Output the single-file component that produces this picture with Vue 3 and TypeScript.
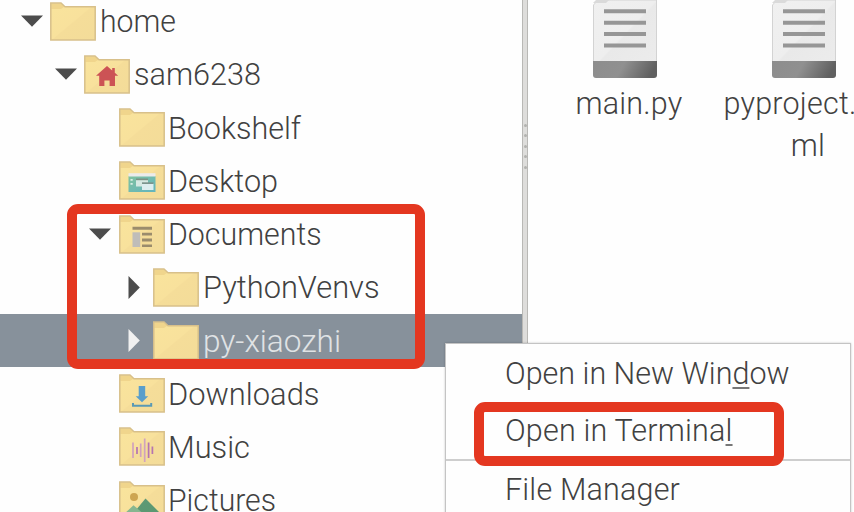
<script setup lang="ts">
type Emblem = 'home' | 'desktop' | 'documents' | 'downloads' | 'music' | 'pictures'

interface TreeNode {
  name: string
  level: number
  state?: 'open' | 'closed'
  emblem?: Emblem
  selected?: boolean
  width: number
}

const nodes: TreeNode[] = [
  { name: 'home', level: 0, state: 'open', width: 77 },
  { name: 'sam6238', level: 1, state: 'open', emblem: 'home', width: 128 },
  { name: 'Bookshelf', level: 2, width: 134 },
  { name: 'Desktop', level: 2, emblem: 'desktop', width: 111 },
  { name: 'Documents', level: 2, state: 'open', emblem: 'documents', width: 154.5 },
  { name: 'PythonVenvs', level: 3, state: 'closed', width: 177.5 },
  { name: 'py-xiaozhi', level: 3, state: 'closed', selected: true, width: 139 },
  { name: 'Downloads', level: 2, emblem: 'downloads', width: 152.5 },
  { name: 'Music', level: 2, emblem: 'music', width: 83 },
  { name: 'Pictures', level: 2, emblem: 'pictures', width: 109 },
]

const files: string[][] = [['main.py'], ['pyproject.', 'ml']]
</script>

<template>
  <div class="window">
    <svg class="defs" width="0" height="0" aria-hidden="true">
      <defs>
        <linearGradient id="folderFill" x1="0" y1="0" x2="1" y2="1">
          <stop offset="0" stop-color="#f9e49c" />
          <stop offset=".5" stop-color="#f8e19c" />
          <stop offset=".52" stop-color="#f5dd99" />
          <stop offset="1" stop-color="#f3dc99" />
        </linearGradient>
        <linearGradient id="paper" x1="0" y1="0" x2="1" y2="1">
          <stop offset="0" stop-color="#f0f0f0" />
          <stop offset=".5" stop-color="#eeeeee" />
          <stop offset=".52" stop-color="#e9e9e9" />
          <stop offset="1" stop-color="#ececec" />
        </linearGradient>
        <linearGradient id="band" x1="0" y1="0" x2="1" y2="0.15">
          <stop offset="0" stop-color="#8d8d8d" />
          <stop offset=".5" stop-color="#909090" />
          <stop offset="1" stop-color="#606060" />
        </linearGradient>
        <linearGradient id="screen" x1="0" y1="0" x2="1" y2="1">
          <stop offset="0" stop-color="#80c29f" />
          <stop offset="1" stop-color="#62b4be" />
        </linearGradient>
        <linearGradient id="hill" x1="0" y1="0" x2="1" y2="1">
          <stop offset="0" stop-color="#5f9a76" />
          <stop offset="1" stop-color="#5a9871" />
        </linearGradient>
      </defs>
    </svg>

    <nav class="tree">
      <div v-for="n in nodes" :key="n.name" class="row" :class="{ selected: n.selected }">
        <div class="indent" :style="{ width: n.level * 34.3 + 'px' }"></div>
        <div class="twisty">
          <svg v-if="n.state === 'open'" width="22" height="12" viewBox="0 0 22 12">
            <path d="M0 .5H22L11 11.8Z" />
          </svg>
          <svg v-else-if="n.state === 'closed'" width="12" height="23" viewBox="0 0 12 23">
            <path d="M.5 0V23L11.8 11.5Z" />
          </svg>
        </div>
        <svg class="folder" width="46" height="39" viewBox="0 0 46 39">
          <path d="M.8 1H11L15 4.7H45.2V38H.8Z" fill="url(#folderFill)" />
          <path d="M1.3 1.6H11L14.3 4.7L11 7H1.3Z" fill="#f0d58c" />
          <path d="M.8 1H11L15 4.7H45.2V38H.8Z" fill="none" stroke="#d8c08a" stroke-width="1.5" />
          <g v-if="n.emblem === 'home'">
            <path d="M23 11L12 20.7H15.2V31H20.4V25.5H25.6V31H31V20.7H34.2L30.8 17.7V13H28.2V15.5Z" fill="#cc5355" />
          </g>
          <g v-else-if="n.emblem === 'desktop'">
            <path d="M9.5 15H36.5V31H9.5Z" fill="url(#screen)" />
            <path d="M9.5 12.2H36.5V15.5H9.5Z" fill="#ebebeb" />
            <path d="M11.5 18H13.7V19.8H11.5ZM11.5 22H13.7V23.8H11.5Z" fill="#d9eee4" />
            <path d="M17 18.5H29V25.5H17Z" fill="#d5e9e3" />
            <path d="M17 17.5H29V19.2H17Z" fill="#7b9286" />
            <path d="M23 22.5H34.5V29H23Z" fill="#dceef0" />
            <path d="M23 21.3H34.5V23H23Z" fill="#7b948d" />
          </g>
          <g v-else-if="n.emblem === 'documents'">
            <path d="M13.5 11.7H33V14.8H13.5ZM23 17.7H33V20.6H23ZM23 23.6H33V26.5H23ZM23 29.4H33V32H23Z" fill="#9b8c6c" />
            <path d="M13.5 17.3H21.2V32H13.5Z" fill="#bfbdb9" />
          </g>
          <g v-else-if="n.emblem === 'downloads'">
            <path d="M19.7 12H26.2V22.3H29.2L23 28.2L16.7 22.3H19.7Z" fill="#599ecb" />
            <path d="M14 29V31.8H32.2V29" fill="none" stroke="#5999b5" stroke-width="2" />
          </g>
          <g v-else-if="n.emblem === 'music'" fill="none" stroke-width="1.7">
            <path d="M14 15.5V31M21.7 16.5V30M25.7 11.5V35" stroke="#d1a2bd" />
            <path d="M18 20V27M29.6 15.5V31M33.4 19.5V27" stroke="#b574b1" />
          </g>
          <g v-else-if="n.emblem === 'pictures'">
            <circle cx="15" cy="16" r="4" fill="#cda552" />
            <path d="M12 35L26.5 17.5L42 33V35Z" fill="url(#hill)" />
            <path d="M4 34L14.5 24.3L26 34Z" fill="#86b690" />
          </g>
        </svg>
        <svg class="label" :width="n.width + 6" height="44">
          <text x="3" y="32.5" :textLength="n.width - 1" lengthAdjust="spacingAndGlyphs">{{ n.name }}</text>
        </svg>
      </div>
    </nav>

    <div class="splitter"><i v-for="d in 5" :key="d"></i></div>

    <main class="files">
      <div v-for="f in files" :key="f[0]" class="file">
        <svg width="66" height="80" viewBox="0 0 66 80">
          <path d="M1.5 5L6 0H64.5V66H1.5Z" fill="url(#paper)" stroke="#d3d3d3" />
          <path d="M1 3L4 0H17L14 3Z" fill="#dadada" />
          <path d="M1 61H65V75Q65 78 62 78H4Q1 78 1 75Z" fill="url(#band)" />
          <path d="M12 11.2H54M12 22.7H54M12 34.1H54M12 45.5H54" stroke="#969696" stroke-width="4" />
        </svg>
        <span v-for="line in f" :key="line" :class="{ long: line.endsWith('.') }">{{ line }}</span>
      </div>
    </main>

    <div class="menu">
      <div class="item">Open in New Win<u>d</u>ow</div>
      <div class="item terminal">Open in Termina<u>l</u></div>
      <div class="item last">File Manager</div>
    </div>
    <div class="mark mark-folder"></div>
    <div class="mark mark-terminal"></div>
  </div>
</template>

<style>
body {
  background: #fefefe;
  overflow: hidden;
}
</style>

<style scoped>
.window {
  position: relative;
  display: flex;
  width: 854px;
  height: 512px;
  overflow: hidden;
  background: #fefefe;
  color: #414141;
  font: 300 30.5px/42px Roboto, sans-serif;
}
.defs {
  position: absolute;
}
.tree {
  flex: none;
  width: 522px;
  margin-top: -5.4px;
}
.row {
  display: flex;
  align-items: center;
  height: 53.23px;
}
.row.selected {
  background: #87919b;
  color: #e0e3e5;
}
.twisty {
  display: flex;
  justify-content: center;
  flex: none;
  width: 24px;
  margin-left: 19.5px;
  margin-right: 6.6px;
  color: #4c4c4c;
}
.twisty svg {
  fill: currentColor;
}
.selected .twisty {
  color: #f0f0f0;
}
.indent,
.folder,
.label {
  flex: none;
}
.label {
  margin-left: 0.6px;
  overflow: visible;
  fill: currentColor;
}
.splitter {
  display: flex;
  flex-direction: column;
  flex: none;
  align-items: center;
  gap: 7.4px;
  box-sizing: border-box;
  width: 6px;
  height: 512px;
  padding-top: 124px;
  background: #dedddb;
  border-left: 1px solid #b9b8b5;
  border-right: 1px solid #b9b8b5;
}
.splitter i {
  width: 3px;
  height: 3px;
  border-radius: 50%;
  background: #b2b2af;
}
.files {
  display: flex;
  flex: none;
  margin-left: 11.5px;
}
.file {
  display: flex;
  flex-direction: column;
  align-items: center;
  width: 179px;
  white-space: nowrap;
  letter-spacing: 0.2px;
}
.file svg {
  margin-bottom: 3px;
  margin-left: -9px;
}
.file .long {
  margin-right: 36px;
}
.menu {
  position: absolute;
  left: 445px;
  top: 343px;
  width: 404px;
  height: 180px;
  background: #fefefe;
  border: 1px solid #c4c4c4;
  box-shadow: 0 0 2px rgba(0, 0, 0, 0.22);
}
.item {
  height: 57.5px;
  padding-left: 59px;
  line-height: 59px;
}
.item u {
  text-decoration-color: #777;
  text-decoration-thickness: 2px;
  text-underline-offset: 3px;
}
.item.terminal {
  height: 57px;
  line-height: 57px;
  letter-spacing: 0.18px;
}
.item.last {
  border-top: 2px solid #cecece;
  line-height: 58px;
  letter-spacing: 0.18px;
}
.mark {
  position: absolute;
  box-sizing: border-box;
  border: 10px solid #e43720;
  border-radius: 11px;
}
.mark-folder {
  left: 67px;
  top: 204px;
  width: 358px;
  height: 165px;
}
.mark-terminal {
  left: 474px;
  top: 402px;
  width: 310px;
  height: 64px;
}
</style>
